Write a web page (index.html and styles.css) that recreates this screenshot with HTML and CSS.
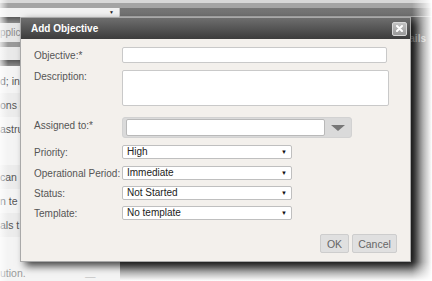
FILE: index.html
```html
<!DOCTYPE html>
<html lang="en">
<head>
    <meta charset="UTF-8">
    <title>Add Objective</title>
    <link rel="stylesheet" href="styles.css">
</head>
<body>
<div class="screen">
    <div class="top-strip"></div>
    <div class="layout">
        <aside class="sidebar">
            <div class="side-select"><span class="side-arrow">&#9660;</span></div>
            <div class="side-head"></div>
            <div class="side-sub">pplic</div>
            <div class="side-bar"></div>
            <div class="side-gap"></div>
            <div class="side-head"></div>
            <div class="side-rows">
                <div class="side-row">d; in</div>
                <div class="side-row shade">ons e</div>
                <div class="side-row">astru</div>
                <div class="side-row"></div>
                <div class="side-row shade">can</div>
                <div class="side-row">n te</div>
                <div class="side-row shade">als t</div>
                <div class="side-row"></div>
                <div class="side-row last"><span>ution.</span><span class="side-dash">&mdash;</span></div>
            </div>
        </aside>
        <main class="content">
            <div class="content-band"></div>
            <div class="content-body">
                <div class="content-details">ails</div>
            </div>
        </main>
    </div>

    <div class="fade-left"></div>
    <div class="fade-right"></div>
    <div class="fade-bottom"></div>

    <div class="dialog">
        <div class="dialog-title">
            <span>Add Objective</span>
            <button class="close-btn" type="button">
                <svg width="7" height="7" viewBox="0 0 7 7"><path d="M1 1L6 6M6 1L1 6" stroke="#fff" stroke-width="2" stroke-linecap="round"/></svg>
            </button>
        </div>
        <div class="dialog-body">
            <div class="field f-objective">
                <label>Objective:*</label>
                <input type="text" class="text-input">
            </div>
            <div class="field f-desc">
                <label>Description:</label>
                <textarea class="text-area"></textarea>
            </div>
            <div class="field f-assign">
                <label>Assigned to:*</label>
                <div class="combo">
                    <input type="text" class="combo-input">
                    <div class="combo-btn"><span class="combo-tri"></span></div>
                </div>
            </div>
            <div class="field f-priority">
                <label>Priority:</label>
                <div class="select">High<span class="sel-arrow">&#9660;</span></div>
            </div>
            <div class="field f-period">
                <label>Operational Period:</label>
                <div class="select">Immediate<span class="sel-arrow">&#9660;</span></div>
            </div>
            <div class="field f-status">
                <label>Status:</label>
                <div class="select">Not Started<span class="sel-arrow">&#9660;</span></div>
            </div>
            <div class="field f-template">
                <label>Template:</label>
                <div class="select">No template<span class="sel-arrow">&#9660;</span></div>
            </div>
            <div class="buttons">
                <button class="btn btn-ok" type="button">OK</button>
                <button class="btn btn-cancel" type="button">Cancel</button>
            </div>
        </div>
    </div>
</div>
</body>
</html>
```

FILE: styles.css
```css
body {
    margin: 0;
    padding: 0;
    background: #fff;
    font-family: "Liberation Sans", Arial, sans-serif;
    font-size: 10px;
    color: #555;
}

.screen {
    position: relative;
    width: 432px;
    height: 281px;
    overflow: hidden;
}

.top-strip {
    height: 8px;
    background: linear-gradient(#d8d8d8 0, #d8d8d8 3px, #a4a4a4 3px, #a4a4a4 8px);
}

.layout {
    display: flex;
    height: 273px;
}

/* left panel of the page behind the dialog */
.sidebar {
    width: 120px;
    background: #f4f4f4;
    display: flex;
    flex-direction: column;
    overflow: hidden;
}

.sidebar > div {
    flex-shrink: 0;
}

.side-select {
    height: 9px;
    background: #f2f2f2;
    border-right: 1px solid #c8c8c8;
    position: relative;
}

.side-arrow {
    position: absolute;
    right: 5px;
    top: 1px;
    font-size: 5px;
    color: #222;
}

.side-head {
    height: 6px;
    background: linear-gradient(#5a5a5a, #8a8a8a);
}

.side-sub {
    height: 19px;
    line-height: 19px;
    background: #e6e6e6;
    color: #8a8a8a;
    white-space: nowrap;
}

.side-bar {
    height: 5px;
    background: #9a9a9a;
}

.side-gap {
    height: 13px;
    background: #e9e9e9;
}

.side-rows {
    display: flex;
    flex-direction: column;
    margin-top: 3px;
}

.side-row {
    height: 24px;
    line-height: 24px;
    flex-shrink: 0;
    white-space: nowrap;
    color: #555;
    font-size: 10.5px;
}

.side-row.shade {
    background: #ececec;
}

.side-row.last {
    color: #9a9a9a;
    position: relative;
}

.side-dash {
    position: absolute;
    left: 85px;
    top: 3px;
    color: #c8c8c8;
}

/* main page area, dimmed */
.content {
    flex: 1;
    display: flex;
    flex-direction: column;
}

.content-band {
    height: 9px;
    background: linear-gradient(#767676 0, #727272 8px, #b0b0b0 8px);
}

.content-body {
    flex: 1;
    background: #5c5c5c;
}

.content-details {
    text-align: right;
    margin-top: 16px;
    margin-right: 6px;
    font-weight: bold;
    color: #c4c4c4;
}

/* soft edges of the screenshot */
.fade-left {
    position: absolute;
    left: 0;
    top: 0;
    width: 8px;
    height: 100%;
    background: linear-gradient(to right, rgba(255,255,255,0.7), rgba(255,255,255,0));
}

.fade-right {
    position: absolute;
    right: 0;
    top: 0;
    width: 20px;
    height: 100%;
    background: linear-gradient(to right, rgba(255,255,255,0), #fff);
}

.fade-bottom {
    position: absolute;
    left: 120px;
    right: 0;
    bottom: 0;
    height: 19px;
    background: linear-gradient(rgba(255,255,255,0), #fff);
}

/* dialog */
.dialog {
    position: absolute;
    left: 20px;
    top: 17px;
    width: 389px;
    border: 1px solid #a9a9a9;
    background: #f3f0ec;
    box-shadow: 5px 4px 8px rgba(0, 0, 0, 0.75);
}

.dialog-title {
    height: 21px;
    display: flex;
    align-items: center;
    justify-content: space-between;
    padding: 0 3px 0 10px;
    background: linear-gradient(#6e6e6e, #3c3c3c);
    color: #fff;
    font-weight: bold;
    font-size: 10px;
}

.close-btn {
    width: 15px;
    height: 14px;
    padding: 0;
    border: 1px solid #d8d8d8;
    border-radius: 2px;
    background: linear-gradient(#c2c2c2, #999);
    display: flex;
    align-items: center;
    justify-content: center;
}

.dialog-body {
    display: flex;
    flex-direction: column;
    padding: 8px 13px 8px 13px;
}

.field {
    display: flex;
    align-items: center;
}

.field label {
    width: 88px;
    flex-shrink: 0;
    color: #555;
}

.f-desc { margin-top: 7px; align-items: flex-start; }
.f-desc label { padding-top: 1px; }
.f-assign { margin-top: 11px; }
.f-assign label { margin-top: -4px; }
.f-priority { margin-top: 7px; }
.f-period { margin-top: 7px; }
.f-status { margin-top: 6px; }
.f-template { margin-top: 6px; }

.text-input {
    box-sizing: border-box;
    width: 265px;
    height: 16px;
    margin: 0;
    border: 1px solid #c9c9c9;
    border-radius: 2px;
    background: #fff;
}

.text-area {
    box-sizing: border-box;
    width: 267px;
    height: 36px;
    margin: 0;
    border: 1px solid #c9c9c9;
    border-radius: 2px;
    background: #fff;
    resize: none;
}

.combo {
    box-sizing: border-box;
    width: 230px;
    height: 21px;
    display: flex;
    align-items: center;
    padding: 0 0 0 3px;
    background: #dadada;
    border: 1px solid #d2d2d2;
    border-radius: 3px;
}

.combo-input {
    box-sizing: border-box;
    width: 199px;
    height: 17px;
    margin: 0;
    border: 1px solid #b9b9b9;
    border-radius: 2px;
    background: #fff;
}

.combo-btn {
    flex: 1;
    display: flex;
    justify-content: center;
    align-items: center;
}

.combo-tri {
    width: 0;
    height: 0;
    border-left: 7px solid transparent;
    border-right: 7px solid transparent;
    border-top: 6px solid #777;
}

.select {
    box-sizing: border-box;
    width: 170px;
    height: 14px;
    line-height: 12px;
    padding-left: 4px;
    border: 1px solid #bfbfbf;
    border-radius: 2px;
    background: #fff;
    color: #222;
    position: relative;
}

.sel-arrow {
    position: absolute;
    right: 4px;
    top: 0;
    font-size: 6px;
    color: #111;
}

.buttons {
    display: flex;
    justify-content: flex-end;
    gap: 3px;
    margin-top: 14px;
}

.btn {
    height: 19px;
    padding: 0;
    border: 1px solid #cdcdcd;
    border-radius: 2px;
    background: #e0e0e0;
    color: #666;
    font-family: "Liberation Sans", Arial, sans-serif;
    font-size: 10.5px;
}

.btn-ok { width: 29px; }
.btn-cancel { width: 45px; }
```
